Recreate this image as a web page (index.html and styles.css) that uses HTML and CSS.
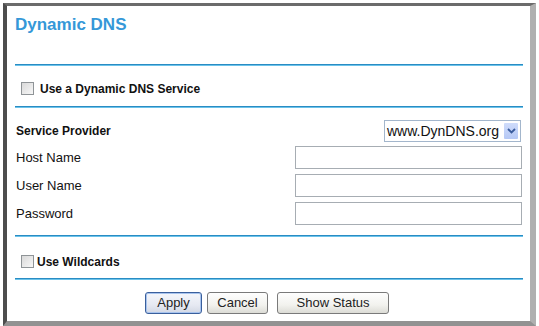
FILE: index.html
```html
<!DOCTYPE html>
<html>
<head>
<meta charset="utf-8">
<link rel="stylesheet" href="styles.css">
</head>
<body>
<div class="frame">
  <div class="title">Dynamic DNS</div>
  <div class="rule"></div>
  <div class="check-row first-check">
    <span class="cb"></span><span class="check-label">Use a Dynamic DNS Service</span>
  </div>
  <div class="rule"></div>
  <div class="fields">
    <div class="row">
      <span class="lbl bold">Service Provider</span>
      <div class="select"><span class="sel-text">www.DynDNS.org</span><span class="sel-btn"><svg width="9" height="6" viewBox="0 0 9 6"><path d="M1 1 L4.5 4.5 L8 1" fill="none" stroke="#3a5c9c" stroke-width="1.8"/></svg></span></div>
    </div>
    <div class="row">
      <span class="lbl">Host Name</span>
      <div class="input"></div>
    </div>
    <div class="row">
      <span class="lbl">User Name</span>
      <div class="input"></div>
    </div>
    <div class="row">
      <span class="lbl">Password</span>
      <div class="input"></div>
    </div>
  </div>
  <div class="rule"></div>
  <div class="check-row second-check">
    <span class="cb"></span><span class="check-label tight">Use Wildcards</span>
  </div>
  <div class="rule"></div>
  <div class="buttons">
    <span class="btn btn-apply">Apply</span>
    <span class="btn btn-cancel">Cancel</span>
    <span class="btn btn-status">Show Status</span>
  </div>
</div>
</body>
</html>
```
FILE: styles.css
```css
html, body {
  margin: 0;
  padding: 0;
  background: #fff;
}
body {
  font-family: "Liberation Sans", Arial, sans-serif;
  color: #111;
  width: 539px;
  height: 326px;
  overflow: hidden;
}
.frame {
  margin: 3px 0 0 3px;
  width: 533px;
  height: 323px;
  box-sizing: border-box;
  border-left: 4px solid #4d4d4d;
  border-top: 3px solid #6b6b6b;
  border-right: 6px solid #b0b0b0;
  border-bottom: 5px solid #929292;
  padding: 0 7px 0 8px;
  display: flex;
  flex-direction: column;
}
.title {
  height: 58px;
  box-sizing: border-box;
  padding-top: 9px;
  font-size: 17px;
  line-height: 20px;
  font-weight: bold;
  color: #3598d8;
}
.rule {
  height: 2px;
  box-sizing: border-box;
  border-top: 1px solid #2a8cc3;
  border-bottom: 1px solid #6cc3ea;
  flex: none;
}
.check-row {
  display: flex;
  align-items: center;
  font-size: 12px;
  font-weight: bold;
  box-sizing: border-box;
}
.first-check {
  height: 40px;
  padding-top: 5px;
}
.second-check {
  height: 41px;
  padding-top: 8px;
}
.cb {
  width: 11px;
  height: 11px;
  border: 1px solid #8f9497;
  background: linear-gradient(135deg, #d9d9d9, #f7f7f7);
  margin-left: 6px;
  margin-right: 6px;
  flex: none;
}
.second-check .cb {
  margin-right: 3px;
}
.fields {
  height: 127px;
  box-sizing: border-box;
  padding-top: 10px;
  display: grid;
  grid-template-rows: 26px 27px 28px 28px;
  align-content: start;
}
.row {
  display: flex;
  align-items: center;
  justify-content: space-between;
  padding-right: 1px;
}
.lbl {
  font-size: 13px;
  padding-left: 1px;
}
.lbl.bold {
  font-size: 12px;
  font-weight: bold;
}
.input {
  width: 225px;
  height: 21px;
  border: 1px solid #a7adb3;
  background: #fff;
}
.select {
  width: 135px;
  height: 20px;
  border: 1px solid #a3b6cc;
  display: flex;
  align-items: center;
  justify-content: space-between;
  margin-right: 1px;
}
.sel-text {
  font-size: 14px;
  padding-left: 2px;
  color: #111;
}
.sel-btn {
  width: 14px;
  height: 16px;
  margin-right: 2px;
  background: linear-gradient(#cfdcfb, #b5c8f5);
  border-radius: 1px;
  display: flex;
  align-items: center;
  justify-content: center;
}
.buttons {
  display: flex;
  justify-content: center;
  padding-right: 4px;
  padding-top: 12px;
}
.btn {
  height: 22px;
  box-sizing: border-box;
  border: 1px solid #7a7a7a;
  border-radius: 3px;
  background: linear-gradient(#fefefe, #f2f2ee 60%, #dcdcd6);
  font-size: 13px;
  line-height: 20px;
  text-align: center;
  color: #222;
}
.btn-apply {
  width: 57px;
  border-color: #3a5f9c;
  box-shadow: inset 0 0 0 1px #a8c4ee;
  background: linear-gradient(#f4f6fb, #e6e9f2 60%, #d3d8e4);
  margin-right: 5px;
}
.btn-cancel {
  width: 61px;
  margin-right: 9px;
}
.btn-status {
  width: 112px;
}
```
